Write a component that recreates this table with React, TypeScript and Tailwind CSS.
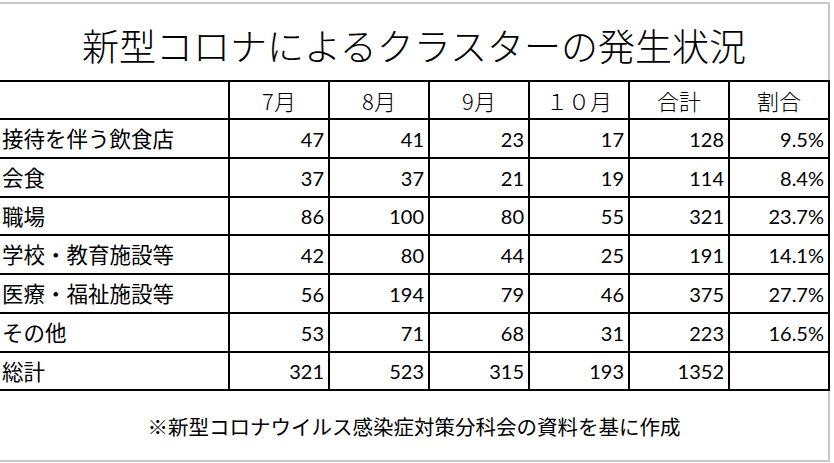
import React from "react";

const jp = "font-['Noto_Sans_CJK_JP',sans-serif]";
const num = "font-['Lato','Liberation_Sans',sans-serif]";

const months = ["7月", "8月", "9月", "１０月", "合計", "割合"];

const rows = [
    { label: "接待を伴う飲食店", vals: ["47", "41", "23", "17", "128", "9.5%"], h: "h-[39px]" },
    { label: "会食", vals: ["37", "37", "21", "19", "114", "8.4%"], h: "h-[39px]" },
    { label: "職場", vals: ["86", "100", "80", "55", "321", "23.7%"], h: "h-[38px]" },
    { label: "学校・教育施設等", vals: ["42", "80", "44", "25", "191", "14.1%"], h: "h-[39px]" },
    { label: "医療・福祉施設等", vals: ["56", "194", "79", "46", "375", "27.7%"], h: "h-[39px]" },
    { label: "その他", vals: ["53", "71", "68", "31", "223", "16.5%"], h: "h-[39px]" },
    { label: "総計", vals: ["321", "523", "315", "193", "1352", ""], h: "h-[38px]" },
];

const App = () => {
    return (
        <div className="w-[834px] h-[463px] bg-white overflow-hidden text-black">
            <div className="h-[2px]" />
            <div className="h-[2px] w-[830px] bg-[#c8c8c8]" />

            {/* title */}
            <div className="w-[830px] h-[76px] border-r-2 border-[#c8c8c8] flex items-center justify-center pt-[6px]">
                <p className={`${jp} text-[37px] font-light leading-none`}>
                    新型コロナによるクラスターの発生状況
                </p>
            </div>

            {/* table */}
            <div className="w-[830px] border-t-2 border-black">
                <div className="flex h-[38px] border-b-2 border-black">
                    <div className="w-[230px] border-r-2 border-black" />
                    {months.map((m) => (
                        <div
                            key={m}
                            className={`${jp} w-[100px] border-r-2 border-black flex items-center justify-center text-[22px] font-light`}
                        >
                            {m}
                        </div>
                    ))}
                </div>
                {rows.map((r) => (
                    <div key={r.label} className={`flex ${r.h} border-b-2 border-black`}>
                        <div className={`${jp} w-[230px] border-r-2 border-black flex items-center pl-[2px] text-[21.5px]`}>
                            {r.label}
                        </div>
                        {r.vals.map((v, i) => (
                            <div
                                key={i}
                                className={`${num} w-[100px] border-r-2 border-black flex items-center justify-end pr-[4px] text-[20px]`}
                            >
                                {v}
                            </div>
                        ))}
                    </div>
                ))}
            </div>

            {/* note */}
            <div className="w-[830px] h-[69px] border-r-2 border-[#c8c8c8] flex items-center justify-center pt-[2px]">
                <p className={`${jp} text-[20.5px]`}>※新型コロナウイルス感染症対策分科会の資料を基に作成</p>
            </div>
            <div className="h-[2px] w-[830px] bg-[#c8c8c8]" />
        </div>
    );
};

export default App;
